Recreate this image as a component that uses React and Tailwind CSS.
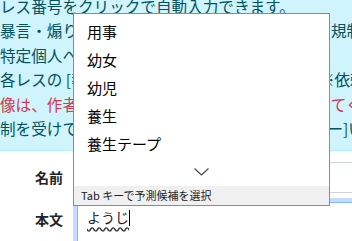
import React from 'react';

const candidates = ['用事', '幼女', '幼児', '養生', '養生テープ'];

function CandidatePopup() {
  return (
    <div className="absolute left-[73px] top-[13px] w-[257px] h-[193px] border border-[#8c8c8c] bg-white flex flex-col z-10">
      <ul className="pt-[4px]">
        {candidates.map((c) => (
          <li key={c} className="h-[28px] leading-[28px] pl-[13px] text-[15px] text-black">
            {c}
          </li>
        ))}
      </ul>
      <div className="h-[28px] flex items-center justify-center">
        <svg width="15" height="8" viewBox="0 0 15 8" fill="none">
          <polyline points="0.5,0.5 7.5,7 14.5,0.5" stroke="#444" strokeWidth="1.1" />
        </svg>
      </div>
      <div className="mt-auto h-[19px] bg-[#f0f0f0] pl-[7px] text-[11px] leading-[19px] text-[#222]">
        Tab キーで予測候補を選択
      </div>
    </div>
  );
}

export default function App() {
  return (
    <div className="relative w-[352px] h-[241px] overflow-hidden bg-white font-['Noto_Sans_CJK_JP','Noto_Sans',sans-serif]">
      {/* Rules box */}
      <div className="-mt-[6px] pb-[10px] bg-[#cff4fc] border-b border-[#b6effb] text-[#055160] text-[15.6px] leading-[24.4px] whitespace-nowrap">
        <p>レス番号をクリックで自動入力できます。</p>
        <p>暴言・煽り・荒らし等の迷惑行為は削除対象と 規制の対象となります。</p>
        <p>特定個人への誹謗中傷は禁止です。</p>
        <p>各レスの [報告] ボタンより 通報が 可能です。※依頼は一件ずつ</p>
        <p className="text-[#d63850]">像は、作者本人の許可なく転載しないようにし てください。</p>
        <p>制を受けている方は管理人宛に問い合わせフォー]い合わせ</p>
      </div>

      {/* Form */}
      <div className="mt-[11px] -mr-4">
        <div className="flex items-center">
          <div className="w-[77px] pr-[14px] text-right font-bold text-[14px] text-[#212529]">名前</div>
          <div className="flex-1 h-[31px] border border-[#ced4da] rounded-[4px] bg-white" />
        </div>
        <div className="flex items-start mt-[9px]">
          <div className="w-[77px] pr-[14px] pt-[7px] text-right font-bold text-[14px] leading-[21px] text-[#212529]">本文</div>
          <div className="flex-1 h-[80px] border border-[#86b7fe] rounded-[4px] shadow-[0_0_0_4px_rgba(13,110,253,0.25)] px-[9px] pt-[4px] text-[14px] leading-[21px] text-[#212529]">
            <span className="underline decoration-wavy decoration-[#333] underline-offset-[3px]">ようじ</span>
            <span className="inline-block w-px h-[16px] bg-black align-[-3px]" />
          </div>
        </div>
      </div>

      <CandidatePopup />
    </div>
  );
}
